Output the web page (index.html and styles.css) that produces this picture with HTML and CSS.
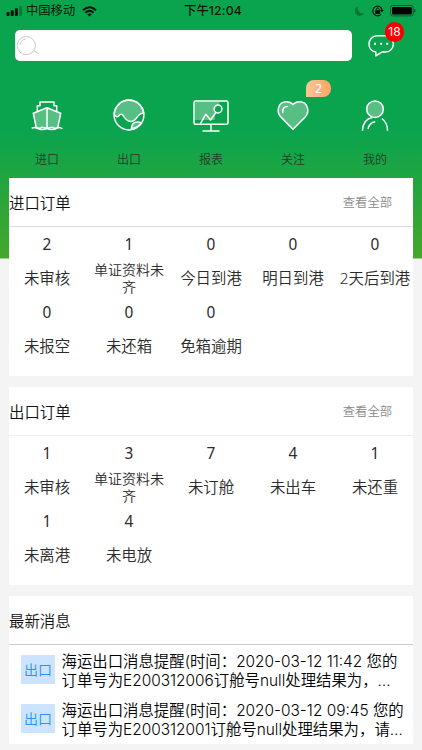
FILE: index.html
```html
<!DOCTYPE html>
<html lang="zh-CN">
<head>
<meta charset="utf-8">
<title>订单</title>
<link rel="stylesheet" href="styles.css">
</head>
<body>
<div class="app">
  <header class="status">
    <div class="carrier">
      <svg width="17" height="12" viewBox="0 0 17 12"><rect x="0.5" y="7" width="3" height="4" rx=".7"/><rect x="4.7" y="5.3" width="3" height="5.7" rx=".7"/><rect x="8.9" y="3.2" width="3" height="7.8" rx=".7"/><rect x="13.1" y="1" width="3" height="10" rx=".7" opacity=".3"/></svg>
      <span class="carrier-name">中国移动</span>
      <svg class="wifi" width="15" height="11" viewBox="0 0 15 11" fill="none" stroke="#001507" stroke-width="2.1"><path d="M1 4.2Q7.5-1.7 14 4.2M3.4 6.7q4.1-3.5 8.2 0"/><path d="M7.5 10.6 5.2 8.3q2.3-1.8 4.6 0z" fill="#001507" stroke="none"/></svg>
    </div>
    <div class="time">下午12:04</div>
    <div class="indicators">
      <svg width="10" height="12" viewBox="0 0 10 12"><path d="M3.4 1A5 5 0 1 0 9.2 8.1 5 5 0 0 1 3.4 1z" fill="#087637"/></svg>
      <svg width="13" height="12" viewBox="0 0 13 12" fill="none" stroke="#001507"><path d="M10 2.6A4.8 4.8 0 1 0 10 9.4M10 2.6Q11 4 11 5.5" stroke-width="1.2"/><path d="M9 5h3.8L11 7.3z" fill="#001507" stroke="none"/><path d="M4.2 5.2h5v3.7h-5z" fill="#001507" stroke="none"/><path d="M5.3 5.5V4.3a1.4 1.4 0 0 1 2.8 0v1.2"/></svg>
      <svg width="26" height="12" viewBox="0 0 26 12"><rect x=".5" y=".5" width="22.7" height="10.4" rx="2" fill="none" stroke="#08582b"/><rect x="2" y="2" width="19.8" height="7.4" rx=".8" fill="#000"/><path d="M24.2 4v3.7q1.5-.6 1.5-1.8T24.2 4z" fill="#08582b"/></svg>
    </div>
  </header>

  <div class="search-row">
    <div class="search">
      <svg width="24" height="22" viewBox="0 0 24 22" fill="none" stroke="#c9cace"><circle cx="11.3" cy="10.6" r="9.1" stroke-width="1"/><path d="M4.8 10q.6-5 5.8-6M17.5 16.8l1.2-1.1 5 3" stroke-width="1"/></svg>
    </div>
    <div class="chat">
      <svg width="28" height="25" viewBox="0 0 28 25" fill="none" stroke="#fff" stroke-width="1.5" stroke-linejoin="round"><path d="M9 1.7h8.200a8.200 8.200 0 0 1 8.200 8.200 8.200 8.200 0 0 1-8.200 8.200h-3.400l-6 3.800v-3.800C3.600 17.400 1 14 1 9.900a8.200 8.200 0 0 1 8-8.200z"/><path d="M7 8.800v2M13.100 8.800v2M19.200 8.800v2" stroke-width="2"/></svg>
      <span class="chat-count">18</span>
    </div>
  </div>

  <nav class="nav">
    <a class="nav-item">
      <svg width="36" height="36" viewBox="0 0 36 36" fill="none" stroke="#fff" stroke-width="1.500" stroke-linejoin="round" stroke-linecap="round"><path d="M4.300 16.300 18 10.800 31.700 16.300l-2.900 14q-3 2-5.300 0l-5.500 1-5.500-1q-3 2-5.300 0z" fill="#57bf84"/><path d="M8.300 13.800V8.800H11V5H25V8.800h2.700v5M18 11v20.500M3.200 31q2.200-1.200 4.500 0 4.800 2.700 10.300.5 5.500 2.200 10.300-.5 2.300-1.200 4.500.5"/></svg>
      <span>进口</span>
    </a>
    <a class="nav-item">
      <svg width="36" height="36" viewBox="0 0 36 36" fill="none" stroke="#fff" stroke-width="1.500"><path d="M3.200 17A14.800 14.800 0 0 1 32.600 16q-3.600.2-6.600 4.400c-5 7-10.500 4-13.500-1.400q-2.100-3.500-5 0-2 2.300-4.300-2zM20.300 31.500q.7-6.500 5.800-6.500 2.200-.2 4.200 1Q26.500 31 20.300 31.500z" fill="#57bf84"/><circle cx="18" cy="18" r="14.900"/></svg>
      <span>出口</span>
    </a>
    <a class="nav-item">
      <svg width="36" height="36" viewBox="0 0 36 36" fill="none" stroke="#fff" stroke-width="1.500" stroke-linejoin="round"><path d="M2 5h25l-5 7v11H2z" fill="#57bf84" stroke="none"/><rect x="1" y="4" width="34" height="23.200" rx="1.500"/><path d="m7.500 26.700 5.300-9.500 4.700 5.800 5.800-8"/><circle cx="25" cy="12" r="3.900"/><path d="M18 27.500V34M9.500 34h17"/></svg>
      <span>报表</span>
    </a>
    <a class="nav-item">
      <svg width="36" height="36" viewBox="0 0 36 36" fill="none" stroke="#fff" stroke-width="1.500" stroke-linecap="round"><path d="M18 32.200 5.800 19.900C1 15 3 4.700 11.500 4.700Q15.500 4.700 18 7.600 20.500 4.700 24.500 4.700C33 4.700 35 15 30.200 19.900z" fill="#57bf84"/><path d="M7.800 15.500q-.8-6 4.700-6"/></svg>
      <span>关注</span>
      <b class="nav-badge">2</b>
    </a>
    <a class="nav-item">
      <svg width="36" height="36" viewBox="0 0 36 36" fill="none" stroke="#fff" stroke-width="1.500"><circle cx="18" cy="12.200" r="8.300" fill="#57bf84"/><path d="M5.500 33.700q0-11 9.700-13.300M24.800 21.500q5.700 4 5.700 12.200M11 32q1.300-6.500 7.200-7.300"/></svg>
      <span>我的</span>
    </a>
  </nav>

  <main class="cards">
    <section class="card">
      <div class="card-head"><h2>进口订单</h2><a>查看全部</a></div>
      <div class="stats">
        <div class="stat"><b>2</b><span>未审核</span></div>
        <div class="stat"><b>1</b><span class="long">单证资料未齐</span></div>
        <div class="stat"><b>0</b><span>今日到港</span></div>
        <div class="stat"><b>0</b><span>明日到港</span></div>
        <div class="stat"><b>0</b><span>2天后到港</span></div>
        <div class="stat"><b>0</b><span>未报空</span></div>
        <div class="stat"><b>0</b><span>未还箱</span></div>
        <div class="stat"><b>0</b><span>免箱逾期</span></div>
      </div>
    </section>

    <section class="card">
      <div class="card-head export"><h2>出口订单</h2><a>查看全部</a></div>
      <div class="stats">
        <div class="stat"><b>1</b><span>未审核</span></div>
        <div class="stat"><b>3</b><span class="long">单证资料未齐</span></div>
        <div class="stat"><b>7</b><span>未订舱</span></div>
        <div class="stat"><b>4</b><span>未出车</span></div>
        <div class="stat"><b>1</b><span>未还重</span></div>
        <div class="stat"><b>1</b><span>未离港</span></div>
        <div class="stat"><b>4</b><span>未电放</span></div>
      </div>
    </section>

    <section class="card news">
      <div class="card-head"><h2>最新消息</h2></div>
      <div class="message">
        <span class="tag">出口</span>
        <p>海运出口消息提醒(时间：2020-03-12 11:42 您的<br>订单号为E200312006订舱号null处理结果为，…</p>
      </div>
      <div class="message">
        <span class="tag">出口</span>
        <p>海运出口消息提醒(时间：2020-03-12 09:45 您的<br>订单号为E200312001订舱号null处理结果为，请…</p>
      </div>
    </section>
  </main>
</div>
</body>
</html>
```
FILE: styles.css
```css
* { box-sizing: border-box; }
body {
  margin: 0;
  background: #f4f4f4;
  color: #2b2b2b;
  font-family: "Noto Sans", "Noto Sans CJK SC", sans-serif;
  font-size: 15.4px;
}
h2, p { margin: 0; font-weight: 400; }
b { font-weight: 400; }
svg { display: block; flex: none; }
.app {
  height: 750px;
  overflow: hidden;
  background: linear-gradient(#0aa44f 0, #0aa44f 130px, #45a72a 258px) 0 0 / 100% 258.5px no-repeat;
}
.status {
  height: 22px;
  display: grid;
  grid-template-columns: 1fr auto 1fr;
  align-items: center;
  padding: 0 6px;
  color: #001507;
  font: 12.3px/22px Inter, "Noto Sans CJK SC", sans-serif;
}
.carrier, .indicators { display: flex; align-items: center; }
.carrier-name { margin-left: 3px; }
.carrier svg:first-child { fill: #001507; }
.wifi { margin-left: 7px; }
.time { font-weight: 500; letter-spacing: .15px; position: relative; left: 2px; }
.indicators { justify-content: flex-end; }
.indicators svg:nth-child(2) { margin: 0 6px; }
.search-row { height: 60px; display: flex; padding: 8px 0 0 15px; }
.search {
  width: 337px;
  height: 31px;
  border-radius: 5px;
  background: #fff;
  padding-top: 5px;
}
.chat { position: relative; margin: 4px 0 0 16px; height: 25px; }
.chat-count {
  position: absolute;
  left: 17px;
  top: -12px;
  width: 19px;
  height: 20px;
  border-radius: 10px;
  background: #f80000;
  color: #fff;
  font: 12px/20px Inter, sans-serif;
  text-align: center;
}
.nav {
  display: grid;
  grid-template-columns: repeat(5, 82px);
  height: 96px;
  padding: 15px 0 0 6px;
}
.nav-item {
  position: relative;
  display: flex;
  flex-direction: column;
  align-items: center;
  gap: 18px;
  font-size: 12px;
  font-weight: 350;
  line-height: 18px;
  color: #28382a;
}
.nav-badge {
  position: absolute;
  left: 54px;
  top: -17px;
  width: 25px;
  height: 17px;
  border-radius: 8px 8px 8px 0;
  background: linear-gradient(90deg, #fbc59a, #ffa463);
  color: #fff;
  line-height: 17px;
  text-align: center;
}
.cards { padding: 0 9px; display: flex; flex-direction: column; gap: 11px; }
.card { height: 198px; background: #fff; width: 404px; font-weight: 350; }
.card-head {
  height: 49px;
  display: flex;
  justify-content: space-between;
  align-items: center;
  border-bottom: 1px solid #ddd;
  padding-right: 21px;
}
.card-head h2 { font-size: 15.4px; font-weight: inherit; color: #111; }
.card-head a { font-size: 12.3px; color: #888; }
.card-head.export { border-bottom: 1.5px solid #eee; }
.stats {
  display: grid;
  grid-template-columns: repeat(5, 82px);
  grid-auto-rows: 68px;
  margin: 0 -3px;
}
.stat { display: grid; grid-template-rows: 35px 33px; text-align: center; }
.stat b { line-height: 35px; }
.stat span { line-height: 33px; white-space: nowrap; }
.stat .long {
  font-size: 14px;
  line-height: 17px;
  white-space: normal;
  width: 72px;
  justify-self: center;
  margin-top: -1px;
}
.news { height: 148px; }
.news .card-head { border-color: #ccc; }
.message { height: 49px; display: flex; padding: 8px 0 0 12px; }
.tag {
  width: 34px;
  height: 29px;
  margin-top: 2px;
  background: #cce4ff;
  color: #2492ff;
  font-size: 14px;
  line-height: 29px;
  text-align: center;
}
.message p {
  margin-left: 6.500px;
  color: #000;
  font: 350 15.4px/18.5px Inter, "Noto Sans CJK SC", sans-serif;
  white-space: nowrap;
}
```
